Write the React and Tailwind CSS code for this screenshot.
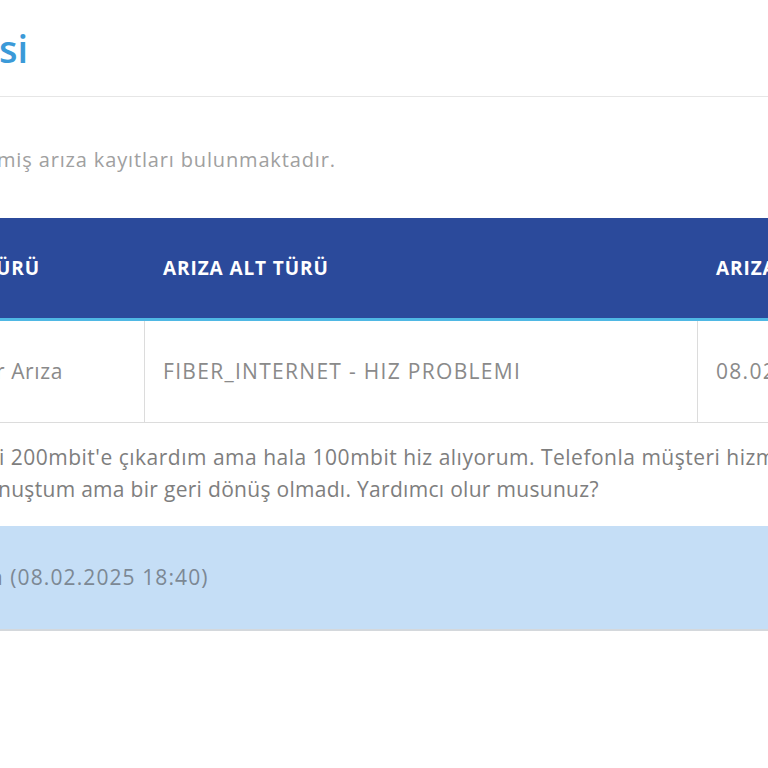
function HeaderCell({ children, className = '' }) {
  return (
    <div className={`flex items-center whitespace-nowrap text-[19px] font-bold tracking-[0.9px] text-white ${className}`}>
      {children}
    </div>
  )
}

function BodyCell({ children, className = '' }) {
  return (
    <div className={`flex items-center whitespace-nowrap text-[21px] tracking-[1.3px] text-[#8a8a8a] ${className}`}>
      {children}
    </div>
  )
}

export default function App() {
  return (
    <div className="h-[768px] w-[768px] overflow-hidden bg-white font-['Open_Sans',sans-serif]">
      <div className="flex h-[97px] items-start border-b border-[#e6e6e6] pt-[24px]">
        <h1 className="-ml-[1px] whitespace-nowrap text-[38px] font-semibold leading-[48px] text-[#3b9ad8]">si</h1>
      </div>

      <p className="-ml-[3px] mt-[48px] h-[30px] whitespace-nowrap text-[20px] leading-[30px] tracking-[0.85px] text-[#a0a0a0]">
        miş arıza kayıtları bulunmaktadır.
      </p>

      <div className="mt-[43px]">
        <div className="grid h-[100px] grid-cols-[145px_553px_1fr] bg-[#2b4a9b]">
          <HeaderCell>
            <span className="-ml-[4px]">ÜRÜ</span>
          </HeaderCell>
          <HeaderCell className="pl-[18px]">ARIZA ALT TÜRÜ</HeaderCell>
          <HeaderCell className="pl-[18px]">ARIZA TARİHİ</HeaderCell>
        </div>
        <div className="h-[3px] bg-[#4fb8e4]" />
        <div className="grid h-[102px] grid-cols-[145px_553px_1fr] border-b border-[#dcdcdc]">
          <BodyCell className="border-r border-[#dcdcdc]">
            <span className="-ml-[4px] tracking-[0.6px]">r Arıza</span>
          </BodyCell>
          <BodyCell className="border-r border-[#dcdcdc] pl-[18px]">FIBER_INTERNET - HIZ PROBLEMI</BodyCell>
          <BodyCell className="pl-[18px]">08.02.2025 18:40</BodyCell>
        </div>
      </div>

      <div className="h-[103px] pt-[18px] text-[21px] leading-[32px] text-[#7e7e7e]">
        <p className="-ml-[1px] whitespace-nowrap tracking-[0.5px]">
          i 200mbit'e çıkardım ama hala 100mbit hiz alıyorum. Telefonla müşteri hizmetleri ile
        </p>
        <p className="-ml-[2px] whitespace-nowrap tracking-[0.3px]">nuştum ama bir geri dönüş olmadı. Yardımcı olur musunuz?</p>
      </div>

      <div className="flex h-[105px] items-center border-b-2 border-[#d4d8dc] bg-[#c5def6]">
        <span className="-ml-[9px] whitespace-nowrap text-[21px] tracking-[1.1px] text-[#7c8894]">a (08.02.2025 18:40)</span>
      </div>
    </div>
  )
}
